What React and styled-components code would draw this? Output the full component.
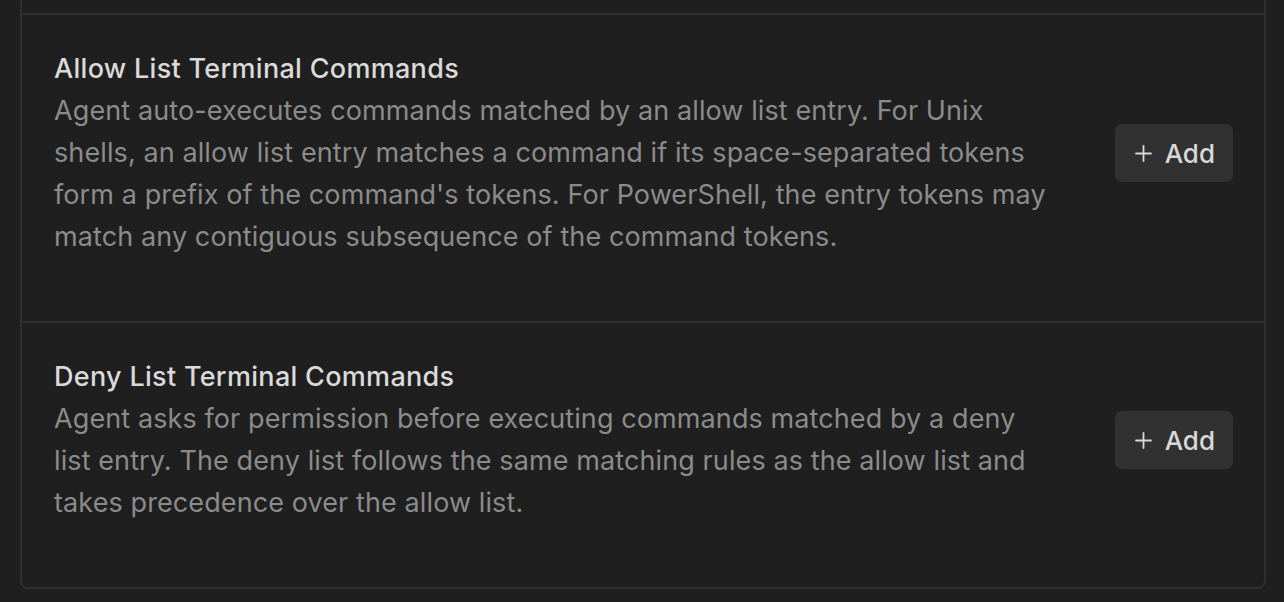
import React from 'react';
import styled, { createGlobalStyle } from 'styled-components';

const GlobalStyle = createGlobalStyle`
  html, body {
    margin: 0;
    padding: 0;
    background: #1f1f1f;
    overflow: hidden;
  }
  body {
    font-family: Inter, "Noto Sans", sans-serif;
    -webkit-font-smoothing: antialiased;
  }
`;

const Page = styled.div`
  padding: 0 18px 0 20px;
`;

const Card = styled.div`
  margin-top: -21px;
  border: 2px solid #2f2f2f;
  border-radius: 8px;
`;

const Row = styled.div`
  display: flex;
  align-items: center;
  justify-content: space-between;
  gap: 40px;
  padding: 33px 31px 63px 32px;
  border-top: 2px solid #2f2f2f;
`;

const Spacer = styled.div`
  height: 32px;
`;

const Text = styled.div`
  max-width: 998px;
`;

const Title = styled.div`
  font-size: 27px;
  line-height: 42px;
  letter-spacing: 0.3px;
  font-weight: 500;
  color: #dadada;
`;

const Description = styled.div`
  font-size: 27px;
  line-height: 42px;
  letter-spacing: 0.1px;
  color: #8b8b8b;
`;

const AddButton = styled.button`
  flex-shrink: 0;
  display: flex;
  align-items: center;
  gap: 13px;
  height: 58px;
  padding: 0 18px 0 20px;
  border: none;
  border-radius: 7px;
  background: #313131;
  color: #d8d8d8;
  font-family: inherit;
  font-size: 26px;
  font-weight: 500;
  cursor: pointer;
`;

const PlusIcon = () => (
  <svg width="17" height="17" viewBox="0 0 17 17" fill="none">
    <path d="M8.5 1v15M1 8.5h15" stroke="#d8d8d8" strokeWidth="1.8" strokeLinecap="round" />
  </svg>
);

const items = [
  {
    title: 'Allow List Terminal Commands',
    text: "Agent auto-executes commands matched by an allow list entry. For Unix shells, an allow list entry matches a command if its space-separated tokens form a prefix of the command's tokens. For PowerShell, the entry tokens may match any contiguous subsequence of the command tokens.",
  },
  {
    title: 'Deny List Terminal Commands',
    text: 'Agent asks for permission before executing commands matched by a deny list entry. The deny list follows the same matching rules as the allow list and takes precedence over the allow list.',
  },
];

const App = () => (
  <Page>
    <GlobalStyle />
    <Card>
      <Spacer />
      {items.map((item) => (
        <Row key={item.title}>
          <Text>
            <Title>{item.title}</Title>
            <Description>{item.text}</Description>
          </Text>
          <AddButton>
            <PlusIcon />
            Add
          </AddButton>
        </Row>
      ))}
    </Card>
  </Page>
);

export default App;
